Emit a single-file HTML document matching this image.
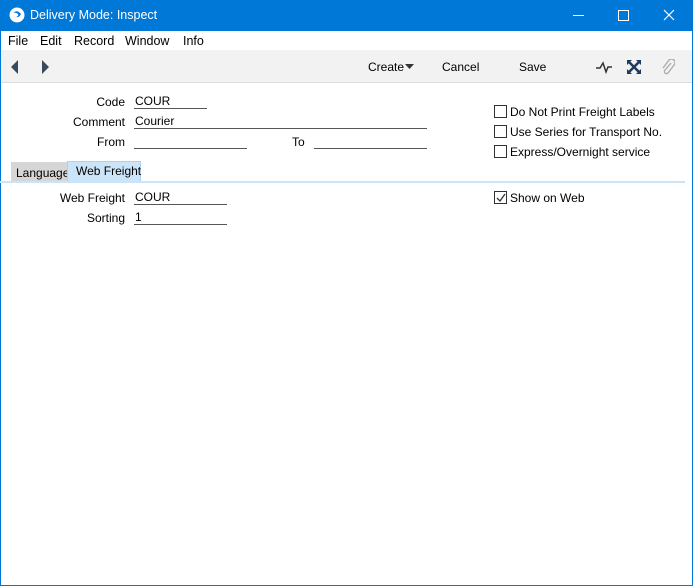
<!DOCTYPE html>
<html><head><style>
body{margin:0;width:693px;height:586px;position:relative;overflow:hidden;background:#fff;font-family:"Liberation Sans",sans-serif;font-size:12px;color:#000}
.a{position:absolute}
.lbl{position:absolute;text-align:right;width:100px}
.fld{position:absolute;border-bottom:1px solid #555;height:14px;line-height:14px;padding-left:1px}
.cb{position:absolute;width:11px;height:11px;border:1px solid #333;background:#fff}
</style></head><body>
<div class="a" style="left:0;top:0;width:693px;height:586px;box-sizing:border-box;border:1px solid #0078d7"></div>
<div class="a" style="left:0;top:0;width:693px;height:31px;background:#0078d7;color:#fff">
 <svg class="a" style="left:9px;top:7px" width="16" height="16" viewBox="0 0 16 16"><circle cx="8" cy="8" r="7.5" fill="#fff"/><path d="M4 6q4-4 8 1q-2 4-5 3q3-1 2-3q-2-2-5-1z" fill="#0078d7"/></svg>
 <div class="a" style="left:30px;top:8px;font-size:12.5px">Delivery Mode: Inspect</div>
 <div class="a" style="left:573px;top:15px;width:11px;height:1px;background:#fff"></div>
 <div class="a" style="left:618px;top:10px;width:9px;height:9px;border:1px solid #fff"></div>
 <svg class="a" style="left:663px;top:9px" width="12" height="12"><path d="M1 1L11 11M11 1L1 11" stroke="#fff" stroke-width="1.2"/></svg>
</div>
<div class="a" style="left:8px;top:34px;font-size:12.5px;word-spacing:0">File</div>
<div class="a" style="left:40px;top:34px;font-size:12.5px">Edit</div>
<div class="a" style="left:74px;top:34px;font-size:12.5px">Record</div>
<div class="a" style="left:125px;top:34px;font-size:12.5px">Window</div>
<div class="a" style="left:183px;top:34px;font-size:12.5px">Info</div>
<div class="a" style="left:1px;top:50px;width:691px;height:32px;background:#f2f2f2;border-bottom:1px solid #ddd"></div>
<svg class="a" style="left:11px;top:60px" width="40" height="14"><path d="M7 0L0 7L7 14z M31 0L38 7L31 14z" fill="#3a4a5c"/></svg>
<div class="a" style="left:368px;top:60px">Create</div>
<svg class="a" style="left:405px;top:64px" width="9" height="5"><path d="M0 0H9L4.5 5z" fill="#333"/></svg>
<div class="a" style="left:442px;top:60px">Cancel</div>
<div class="a" style="left:519px;top:60px">Save</div>
<svg class="a" style="left:596px;top:60px" width="16" height="14"><path d="M0 8H4L7 3L10 12L12 7H16" stroke="#333" stroke-width="1.5" fill="none"/></svg>
<svg class="a" style="left:627px;top:60px" width="14" height="14"><path d="M0 0H5L0 5zM14 0H9L14 5zM0 14H5L0 9zM14 14H9L14 9z" fill="#1e3a5c"/><path d="M2 2L12 12M12 2L2 12" stroke="#1e3a5c" stroke-width="2.5"/></svg>
<svg class="a" style="left:661px;top:59px" width="14" height="16"><path d="M10 4L4 11a2 2 0 0 0 3 3l6-8a3.5 3.5 0 0 0-5-5L2 9" stroke="#aaa" stroke-width="1.3" fill="none"/></svg>
<div class="lbl" style="left:25px;top:95px">Code</div>
<div class="fld" style="left:134px;top:94px;width:72px">COUR</div>
<div class="lbl" style="left:25px;top:115px">Comment</div>
<div class="fld" style="left:134px;top:114px;width:292px">Courier</div>
<div class="lbl" style="left:25px;top:135px">From</div>
<div class="fld" style="left:134px;top:134px;width:112px"></div>
<div class="a" style="left:292px;top:135px">To</div>
<div class="fld" style="left:314px;top:134px;width:112px"></div>
<div class="cb" style="left:494px;top:105px"></div><div class="a" style="left:510px;top:105px">Do Not Print Freight Labels</div>
<div class="cb" style="left:494px;top:125px"></div><div class="a" style="left:510px;top:125px">Use Series for Transport No.</div>
<div class="cb" style="left:494px;top:145px"></div><div class="a" style="left:510px;top:145px">Express/Overnight service</div>
<div class="a" style="left:11px;top:162px;width:56px;height:19px;background:#d6d6d6"></div>
<div class="a" style="left:16px;top:166px">Language</div>
<div class="a" style="left:67px;top:161px;width:74px;height:20px;background:#cce4f7;border:1px solid #aed0ee;border-bottom:none;box-sizing:border-box"></div>
<div class="a" style="left:76px;top:164px">Web Freight</div>
<div class="a" style="left:0;top:181px;width:685px;height:2px;background:#cce4f7"></div>
<div class="lbl" style="left:25px;top:191px">Web Freight</div>
<div class="fld" style="left:134px;top:190px;width:92px">COUR</div>
<div class="lbl" style="left:25px;top:211px">Sorting</div>
<div class="fld" style="left:134px;top:210px;width:92px">1</div>
<div class="cb" style="left:494px;top:191px"></div>
<svg class="a" style="left:496px;top:193px" width="10" height="10"><path d="M1 5L4 8L9 1" stroke="#333" stroke-width="1.3" fill="none"/></svg>
<div class="a" style="left:510px;top:191px">Show on Web</div>
</body></html>
